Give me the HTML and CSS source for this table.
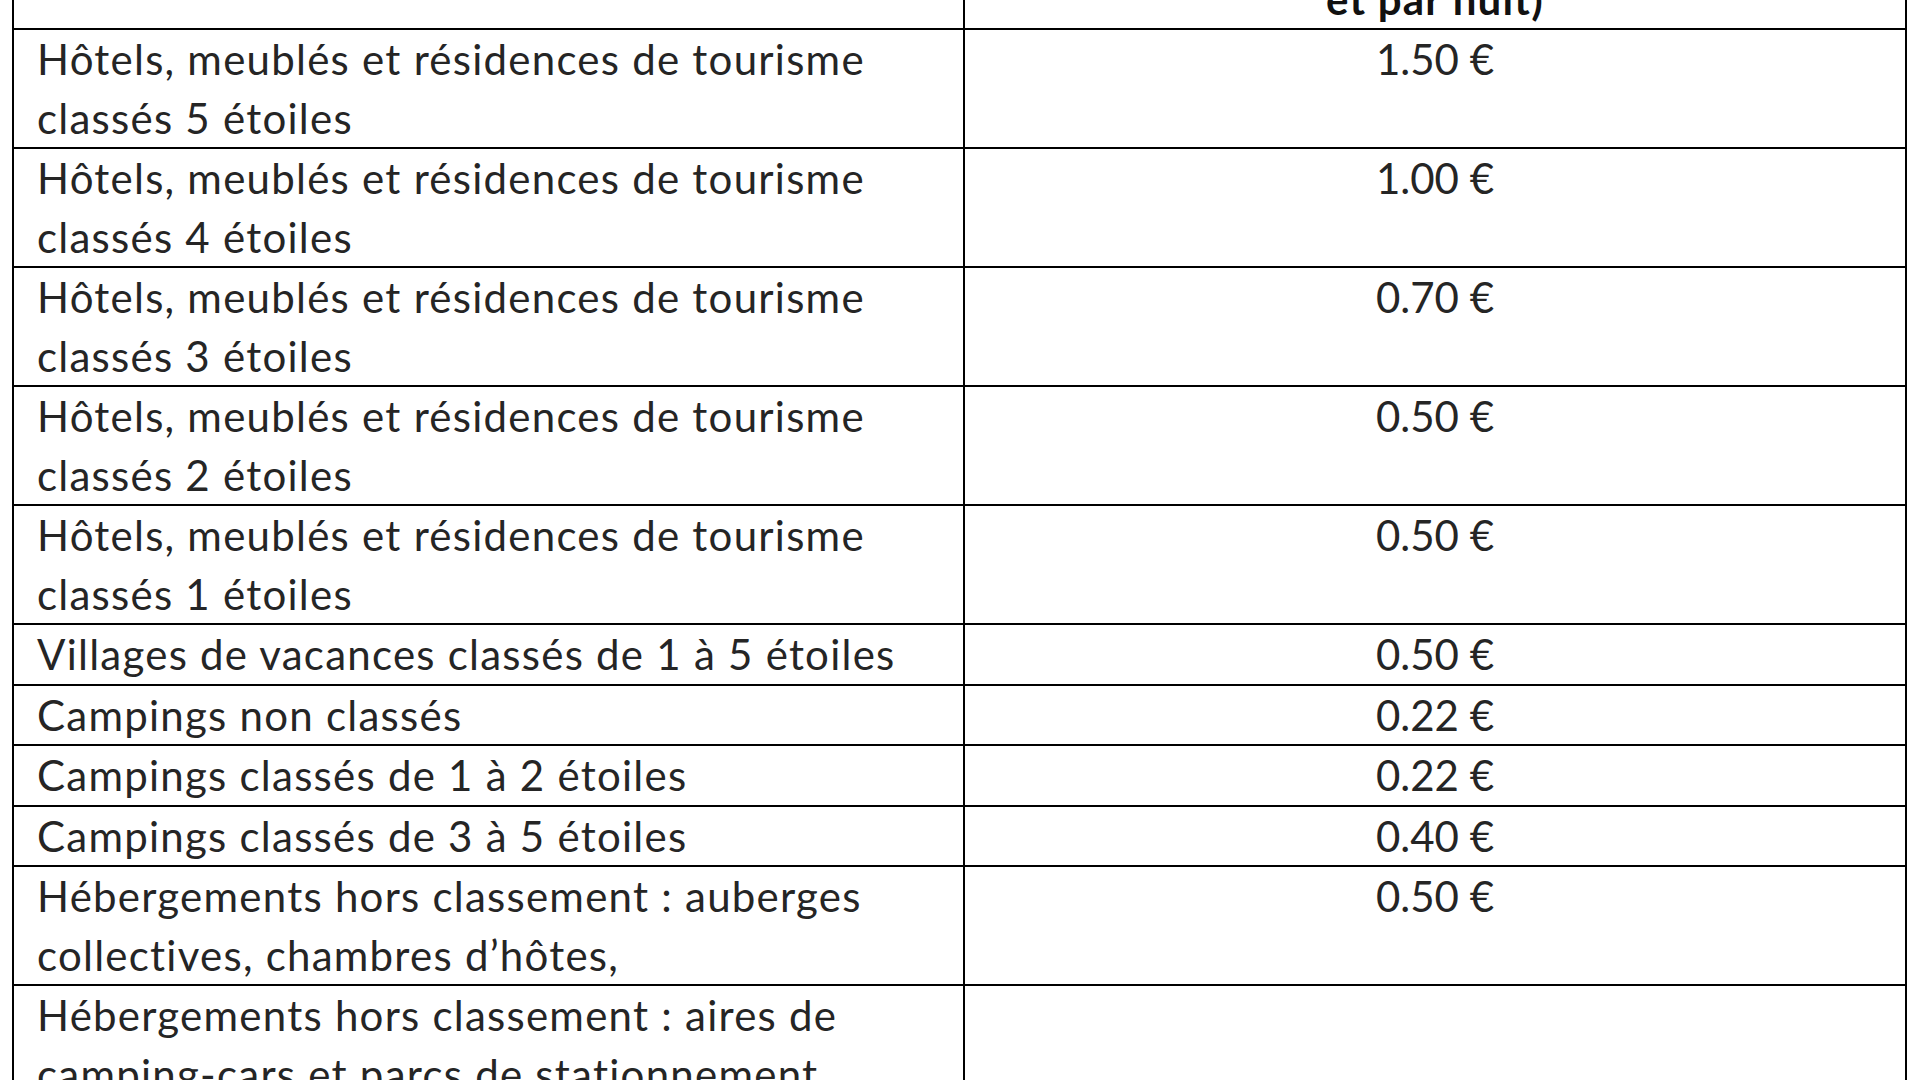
FILE: index.html
```html
<!DOCTYPE html>
<html lang="fr">
<head>
<meta charset="utf-8">
<title>Tarifs taxe de séjour</title>
<link rel="stylesheet" href="styles.css">
</head>
<body>
<div class="viewport">
  <div class="grid">
    <div class="cell head"></div>
    <div class="cell head price">Tarif (par personne<br>et par nuit)</div>

    <div class="cell label">Hôtels, meublés et résidences de tourisme<br>classés 5 étoiles</div>
    <div class="cell price">1.50 €</div>

    <div class="cell label">Hôtels, meublés et résidences de tourisme<br>classés 4 étoiles</div>
    <div class="cell price">1.00 €</div>

    <div class="cell label">Hôtels, meublés et résidences de tourisme<br>classés 3 étoiles</div>
    <div class="cell price">0.70 €</div>

    <div class="cell label">Hôtels, meublés et résidences de tourisme<br>classés 2 étoiles</div>
    <div class="cell price">0.50 €</div>

    <div class="cell label">Hôtels, meublés et résidences de tourisme<br>classés 1 étoiles</div>
    <div class="cell price">0.50 €</div>

    <div class="cell label">Villages de vacances classés de 1 à 5 étoiles</div>
    <div class="cell price">0.50 €</div>

    <div class="cell label">Campings non classés</div>
    <div class="cell price">0.22 €</div>

    <div class="cell label">Campings classés de 1 à 2 étoiles</div>
    <div class="cell price">0.22 €</div>

    <div class="cell label">Campings classés de 3 à 5 étoiles</div>
    <div class="cell price">0.40 €</div>

    <div class="cell label">Hébergements hors classement : auberges<br>collectives, chambres d’hôtes,</div>
    <div class="cell price">0.50 €</div>

    <div class="cell label">Hébergements hors classement : aires de<br>camping-cars et parcs de stationnement<br>touristiques par tranche de 24 heures</div>
    <div class="cell price"></div>
  </div>
</div>
</body>
</html>
```

FILE: styles.css
```css
html, body {
  margin: 0;
  padding: 0;
  background: #ffffff;
}

.viewport {
  width: 1920px;
  height: 1080px;
  overflow: hidden;
}

.grid {
  display: grid;
  grid-template-columns: 951px 942px;
  width: max-content;
  margin: -97px 0 0 12px;
  border-left: 2px solid #000;
  border-top: 2px solid #000;
  font-family: Lato, "Open Sans", sans-serif;
  font-size: 42px;
  line-height: 58.5px;
  color: #252525;
}

.cell {
  box-sizing: border-box;
  border-right: 2px solid #000;
  border-bottom: 2px solid #000;
  padding: 0 23px;
  white-space: nowrap;
}

.label {
  letter-spacing: 1.25px;
}

.price {
  text-align: center;
}

.head {
  padding-top: 6px;
  font-weight: 700;
  letter-spacing: 1.2px;
  color: #111;
}
```
